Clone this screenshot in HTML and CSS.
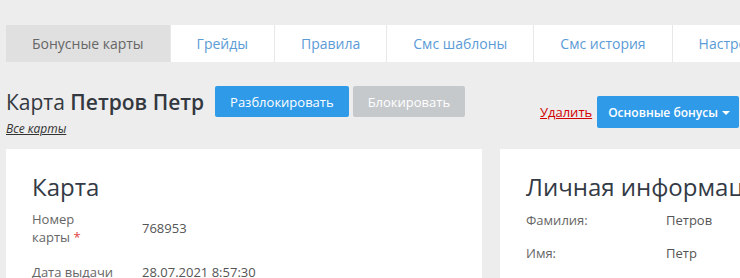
FILE: index.html
```html
<!DOCTYPE html>
<html lang="ru">
<head>
<meta charset="utf-8">
<link rel="stylesheet" href="styles.css">
</head>
<body>
<div class="page">
  <nav class="tabs">
    <a class="tab active">Бонусные карты</a>
    <a class="tab">Грейды</a>
    <a class="tab">Правила</a>
    <a class="tab">Смс шаблоны</a>
    <a class="tab">Смс история</a>
    <a class="tab">Настройки</a>
  </nav>
  <header class="head">
    <div class="head-left">
      <div class="title-row">
        <h1 class="title">Карта <b>Петров Петр</b></h1>
        <button class="btn btn-blue">Разблокировать</button>
        <button class="btn btn-gray">Блокировать</button>
      </div>
      <a class="all-link">Все карты</a>
    </div>
    <div class="head-right">
      <a class="del-link">Удалить</a>
      <button class="btn btn-blue btn-drop">Основные бонусы <span class="caret"></span></button>
    </div>
  </header>
  <div class="cards">
    <section class="card">
      <h2 class="card-title">Карта</h2>
      <div class="form">
        <div class="form-row">
          <div class="form-label">Номер карты&nbsp;<span class="req">*</span></div>
          <div class="form-value">768953</div>
        </div>
        <div class="form-row">
          <div class="form-label">Дата выдачи</div>
          <div class="form-value">28.07.2021 8:57:30</div>
        </div>
      </div>
    </section>
    <section class="card">
      <h2 class="card-title">Личная информация</h2>
      <div class="info-row">
        <div class="info-label">Фамилия:</div>
        <div class="info-value">Петров</div>
      </div>
      <div class="info-row">
        <div class="info-label">Имя:</div>
        <div class="info-value">Петр</div>
      </div>
    </section>
  </div>
</div>
</body>
</html>
```
FILE: styles.css
```css
html, body {
  margin: 0;
  padding: 0;
  overflow: hidden;
  background: #ededed;
}
body {
  font-family: "Open Sans", "Liberation Sans", sans-serif;
  color: #333;
}
.page {
  width: 970px;
  padding: 25px 0 0 6px;
}
.tabs {
  display: flex;
  height: 37px;
  background: #fff;
}
.tab {
  display: flex;
  align-items: center;
  padding: 0 26px;
  font-size: 14px;
  color: #5b9bd6;
  border-right: 1px solid #e8e8e8;
  white-space: nowrap;
}
.tab.active {
  background: #e0e0e0;
  color: #666;
}
.head {
  display: flex;
  justify-content: space-between;
  width: 733px;
  margin-top: 24px;
}
.title-row {
  display: flex;
  align-items: center;
  gap: 4px;
}
.title {
  margin: 0 7px 0 0;
  font-size: 21px;
  font-weight: 400;
  color: #333840;
}
.title b {
  font-weight: 600;
}
.btn {
  border: 0;
  border-radius: 2px;
  font-family: inherit;
  font-size: 13px;
  color: #fff;
  height: 31px;
  padding: 0 15px;
}
.btn-blue {
  background: #2f9ae8;
}
.btn-gray {
  background: #c6c9cc;
  width: 112px;
}
.all-link {
  display: block;
  margin-top: 3px;
  font-size: 12px;
  font-style: italic;
  text-decoration: underline;
  color: #333;
}
.head-right {
  display: flex;
  align-items: center;
  gap: 5px;
  padding-top: 10px;
  align-self: flex-start;
}
.del-link {
  font-size: 13px;
  color: #d20000;
  text-decoration: underline;
}
.btn-drop {
  height: 32px;
  font-size: 12px;
  font-weight: 600;
  padding: 0 9px 0 11px;
}
.caret {
  display: inline-block;
  width: 0;
  height: 0;
  border-left: 4px solid transparent;
  border-right: 4px solid transparent;
  border-top: 4px solid #fff;
  vertical-align: middle;
  margin-left: 1px;
}
.cards {
  display: grid;
  grid-template-columns: 476px 470px;
  gap: 18px;
  margin-top: 12px;
}
.card {
  background: #fff;
  padding: 22px 26px;
  height: 200px;
}
.card-title {
  margin: 0;
  font-size: 24px;
  font-weight: 400;
  color: #333a45;
  line-height: 32px;
}
.form {
  padding-top: 7px;
}
.form-row {
  display: flex;
  align-items: center;
  margin-bottom: 17px;
  font-size: 13px;
  line-height: 18px;
}
.form-label {
  width: 86px;
  margin-right: 24px;
  color: #666;
}
.req {
  color: #e04040;
}
.form-value {
  color: #555;
}
.info-row {
  display: flex;
  height: 33px;
  align-items: center;
  font-size: 13px;
}
.info-label {
  width: 140px;
  color: #666;
}
.info-value {
  color: #555;
}
```
